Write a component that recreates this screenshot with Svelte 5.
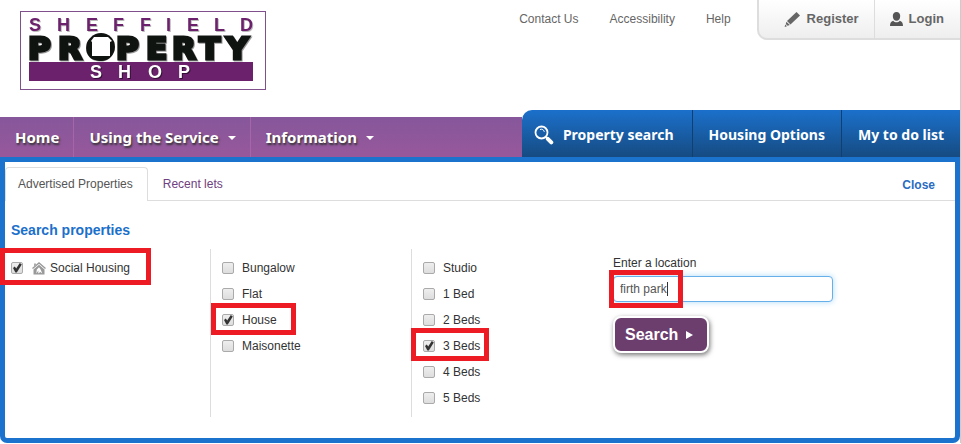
<script lang="ts">
	type Option = { label: string; checked: boolean };

	let propertyTypes: Option[] = $state([
		{ label: 'Bungalow', checked: false },
		{ label: 'Flat', checked: false },
		{ label: 'House', checked: true },
		{ label: 'Maisonette', checked: false }
	]);

	let bedrooms: Option[] = $state([
		{ label: 'Studio', checked: false },
		{ label: '1 Bed', checked: false },
		{ label: '2 Beds', checked: false },
		{ label: '3 Beds', checked: true },
		{ label: '4 Beds', checked: false },
		{ label: '5 Beds', checked: false }
	]);

	let socialHousing = $state(true);
	let location = $state('firth park');
</script>

<div class="page">
	<header>
		<a class="logo" href="#home" aria-label="Sheffield Property Shop">
			<svg width="246" height="79" viewBox="0 0 246 79">
				<rect x="0.5" y="0.5" width="245" height="78" fill="#fff" stroke="#80508c" />
				<text class="logo-small" fill="#6c216c" x="9 37 66 93 120 146 167 194 220" y="20">SHEFFIELD</text>
				<text class="logo-large" x="8 38 66 96 126 152 179 206" y="48">PROPERTY</text>
				<circle cx="81" cy="36" r="14" fill="#101411" />
				<path d="M71 30 L74 26 H88 L92 30 L90 31 V45 H72 V31 Z" fill="#fff" />
				<rect x="9" y="51" width="224" height="19" fill="#6c216c" />
				<text class="logo-small shop" fill="#fff" x="70 98 128 158" y="67">SHOP</text>
			</svg>
		</a>
		<div class="top-links">
			<a href="#contact">Contact Us</a>
			<a href="#accessibility">Accessibility</a>
			<a href="#help">Help</a>
		</div>
		<div class="account">
			<a class="register" href="#register">
				<svg width="17" height="17" viewBox="0 0 17 17" fill="#666">
					<path d="M12.5 1 L16 4.5 L6.5 13.5 L3 10 Z" />
					<path d="M2.4 10.7 L5.8 14.1 L3.6 14.7 L1.8 12.9 Z" />
					<path d="M1.3 13.5 L3 15.2 L0.6 16 Z" />
				</svg>
				Register
			</a>
			<a class="login" href="#login">
				<svg width="13" height="14" viewBox="0 0 13 14" fill="#555">
					<path d="M6.5 0 C9 0 10.2 1.7 10.2 4 C10.2 6.8 8.7 8.8 6.5 8.8 C4.3 8.8 2.8 6.8 2.8 4 C2.8 1.7 4 0 6.5 0 Z" />
					<path d="M0 14 C0 10.8 1 9.4 3.2 8.7 C5 10.7 8 10.7 9.8 8.7 C12 9.4 13 10.8 13 14 Z" />
				</svg>
				Login
			</a>
		</div>
	</header>

	<nav>
		<div class="nav-main">
			<a href="#home">Home</a>
			<a href="#service">Using the Service <span class="arrow"></span></a>
			<a href="#information">Information <span class="arrow"></span></a>
		</div>
		<div class="nav-search">
			<a class="with-icon" href="#search">
				<svg width="20" height="20" viewBox="0 0 20 20" fill="none" stroke="#fff">
					<circle cx="7.5" cy="7.5" r="6" stroke-width="1.8" />
					<path d="M6 4.5 C8 3.6 10 5 10.3 6.8" stroke-width="1" />
					<path d="M12 12 L13.5 13.5" stroke-width="2" />
					<path d="M13.8 13.8 L17.3 17.3" stroke-width="4" stroke-linecap="round" />
				</svg>
				Property search
			</a>
			<a href="#options">Housing Options</a>
			<a href="#todo">My to do list</a>
		</div>
	</nav>

	<main>
		<div class="tabs">
			<a class="tab active" href="#advertised">Advertised Properties</a>
			<a class="tab" href="#recent">Recent lets</a>
			<button class="close" type="button">Close</button>
		</div>

		<h2>Search properties</h2>

		<form onsubmit={(e) => e.preventDefault()}>
			<div class="column">
				<label class="option marked social">
					<input type="checkbox" bind:checked={socialHousing} />
					<svg width="14" height="13" viewBox="0 0 14 13">
						<path d="M0.5 6.5 L7 1 L13.5 6.5" fill="none" stroke="#999" stroke-width="1.4" />
						<path d="M1.5 7.5 L7 2.8 L12.5 7.5 V12.5 H1.5 Z" fill="#999" />
						<path d="M4.3 11.5 L4.8 7.5 L7 5.3 L8.5 7.2 L10.3 11.5 L8.3 10 L6.2 11.5 L6.4 8.5 Z" fill="#fff" />
						<path d="M2 1.5 H4 V3.5 L2 5 Z" fill="#aaa" />
					</svg>
					Social Housing
				</label>
			</div>
			<div class="column divided">
				{#each propertyTypes as option (option.label)}
					<label class="option" class:marked={option.label === 'House'} class:house={option.label === 'House'}>
						<input type="checkbox" bind:checked={option.checked} />
						{option.label}
					</label>
				{/each}
			</div>
			<div class="column divided">
				{#each bedrooms as option (option.label)}
					<label class="option" class:marked={option.label === '3 Beds'} class:beds={option.label === '3 Beds'}>
						<input type="checkbox" bind:checked={option.checked} />
						{option.label}
					</label>
				{/each}
			</div>
			<div class="location">
				<label for="location">Enter a location</label>
				<div class="field marked">
					<input id="location" type="text" bind:value={location} />
					<span class="caret"></span>
				</div>
				<button class="search" type="submit">
					Search
					<svg width="7" height="8" viewBox="0 0 7 8"><path d="M0 0 L7 4 L0 8 Z" fill="#fff" /></svg>
				</button>
			</div>
		</form>
	</main>
</div>

<style>
	:global(body) {
		margin: 0;
		background: #fff;
	}

	.page {
		border-right: 1px solid #ccc;
		font-family: 'Liberation Sans', Arial, sans-serif;
		font-size: 12px;
		color: #333;
	}

	a {
		color: inherit;
		text-decoration: none;
	}

	header {
		display: flex;
		align-items: flex-start;
		height: 110px;
	}

	.logo {
		margin: 11px auto 0 20px;
	}

	.logo svg {
		display: block;
	}

	.logo-small {
		font-size: 18px;
		font-weight: 700;
		filter: drop-shadow(1px 1px 0 #bbb);
	}

	.logo-small.shop {
		filter: drop-shadow(1px 1px 0 #321035);
	}

	.logo-large {
		font-family: 'DejaVu Sans', sans-serif;
		font-size: 31px;
		font-weight: 700;
		fill: #101411;
		stroke: #101411;
		stroke-width: 3px;
		filter: drop-shadow(1px 1px 0 #999);
	}

	.top-links {
		display: flex;
		gap: 31px;
		margin: 11px 26px 0 0;
		line-height: 16px;
		color: #666;
	}

	.account {
		display: flex;
		box-sizing: border-box;
		height: 40px;
		border: solid #ddd;
		border-width: 0 0 2px 2px;
		border-radius: 0 0 0 10px;
		background: linear-gradient(#fff, #eee);
		font-size: 13px;
		font-weight: 700;
		line-height: 36px;
		color: #666;
	}

	.account a {
		display: flex;
		align-items: center;
		gap: 6px;
	}

	.register {
		padding: 0 15px 0 25px;
	}

	.login {
		padding: 0 16px 0 15px;
		border-left: 1px solid #ddd;
	}

	nav {
		display: flex;
		align-items: flex-end;
		font-family: 'Noto Sans', Tahoma, sans-serif;
		font-size: 15px;
		font-weight: 700;
		color: #fff;
		white-space: nowrap;
	}

	.nav-main {
		display: flex;
		flex: 1;
		height: 40px;
		background: linear-gradient(#86579b, #97589b);
		line-height: 38px;
		text-shadow: 1px 2px 2px #333;
	}

	.nav-main a {
		display: flex;
		align-items: center;
		padding: 0 14px 0 15px;
	}

	.nav-main a + a {
		border-left: 1px solid #a864a8;
	}

	.arrow {
		margin: 2px 0 0 9px;
		border: 4px solid transparent;
		border-top-color: #fff;
		border-bottom: 0;
	}

	.nav-search {
		display: flex;
		height: 47px;
		border-radius: 10px 0 0;
		background: linear-gradient(#1b70cb, #164b82);
		font-size: 14px;
		line-height: 45px;
	}

	.nav-search a {
		display: flex;
		align-items: center;
		padding: 2px 16px 0;
	}

	.nav-search a + a {
		border-left: 1px solid #123f70;
	}

	.nav-search .with-icon {
		gap: 9px;
		padding: 2px 18px 0 12px;
	}

	main {
		border: 5px solid #1b73cd;
		border-radius: 0 0 7px 7px;
		background: #fff;
	}

	.tabs {
		display: flex;
		height: 33px;
		padding-top: 5px;
		border-bottom: 1px solid #ddd;
		line-height: 34px;
	}

	.tab {
		padding: 0 15px;
		color: #704080;
	}

	.tab.active {
		height: 33px;
		padding: 0 14px 0 12px;
		border: 1px solid #ddd;
		border-bottom: 0;
		border-radius: 4px 4px 0 0;
		background: #fff;
		line-height: 32px;
		color: #555;
	}

	.close {
		margin: 0 20px 0 auto;
		padding: 2px 0 0;
		border: 0;
		background: none;
		font: 700 12px 'Liberation Sans', Arial, sans-serif;
		color: #2a6cc0;
	}

	h2 {
		margin: 19px 6px 9px;
		font-size: 14px;
		line-height: 20px;
		color: #1b70cb;
	}

	form {
		display: grid;
		grid-template-columns: 205fr 201fr 201fr 343fr;
		padding-bottom: 21px;
	}

	.column {
		box-sizing: border-box;
		min-height: 168px;
		padding: 6px 6px 0;
	}

	.divided {
		padding: 6px 11px 0;
		border-left: 1px solid #ddd;
	}

	.option {
		position: relative;
		display: flex;
		align-items: center;
		width: max-content;
		height: 26px;
	}

	.option svg {
		margin: 0 4px 0 1px;
	}

	input[type='checkbox'] {
		appearance: none;
		box-sizing: border-box;
		width: 12px;
		height: 12px;
		margin: 0 8px 0 0;
		border: 1px solid #aaa;
		border-radius: 2px;
		background: linear-gradient(#eee, #ddd);
	}

	input[type='checkbox']:checked::before {
		content: '';
		display: block;
		width: 10px;
		height: 10px;
		background: #333;
		clip-path: polygon(10% 50%, 28% 35%, 42% 55%, 78% 0, 98% 15%, 48% 95%, 34% 95%);
	}

	/* Red boxes around the chosen criteria */
	.marked::after {
		content: '';
		position: absolute;
		border: 5px solid #ed1c24;
		pointer-events: none;
	}

	.social::after {
		inset: -7px -21px -4px -11px;
	}

	.house::after {
		inset: -4px -19px -2px -11px;
	}

	.beds::after {
		inset: -5px -9px -2px -12px;
	}

	.location {
		padding: 5px 0 0 1px;
	}

	.location label {
		display: block;
		height: 22px;
		line-height: 18px;
	}

	.field {
		position: relative;
		width: 220px;
	}

	.field::after {
		inset: -6px 150px -6px -4px;
	}

	.field input {
		display: block;
		box-sizing: border-box;
		width: 100%;
		height: 26px;
		padding: 0 6px;
		border: 1px solid #66afe9;
		border-radius: 4px;
		outline: 0;
		box-shadow: 0 0 6px #b0daf8;
		font: 12px 'Liberation Sans', Arial, sans-serif;
		color: #555;
	}

	.caret {
		position: absolute;
		top: 6px;
		left: 54px;
		width: 1px;
		height: 14px;
		background: #333;
	}

	.search {
		display: flex;
		align-items: center;
		gap: 8px;
		height: 37px;
		margin: 14px 0 0;
		padding: 0 14px 0 10px;
		border: 2px solid #fff;
		border-radius: 8px;
		background: #6c3e6e;
		box-shadow: 1px 2px 5px #777;
		font: 700 16px 'Liberation Sans', Arial, sans-serif;
		color: #fff;
	}
</style>
